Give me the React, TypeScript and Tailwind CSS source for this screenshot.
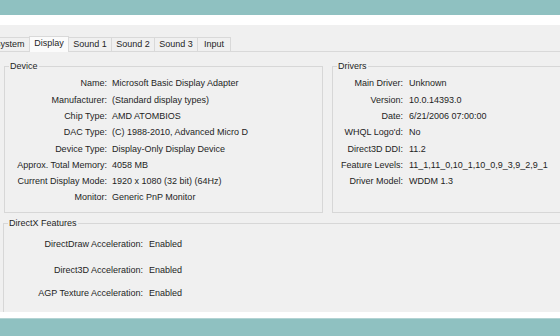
const device: [string, string][] = [
  ["Name:", "Microsoft Basic Display Adapter"],
  ["Manufacturer:", "(Standard display types)"],
  ["Chip Type:", "AMD ATOMBIOS"],
  ["DAC Type:", "(C) 1988-2010, Advanced Micro D"],
  ["Device Type:", "Display-Only Display Device"],
  ["Approx. Total Memory:", "4058 MB"],
  ["Current Display Mode:", "1920 x 1080 (32 bit) (64Hz)"],
  ["Monitor:", "Generic PnP Monitor"],
];

const drivers: [string, string][] = [
  ["Main Driver:", "Unknown"],
  ["Version:", "10.0.14393.0"],
  ["Date:", "6/21/2006 07:00:00"],
  ["WHQL Logo'd:", "No"],
  ["Direct3D DDI:", "11.2"],
  ["Feature Levels:", "11_1,11_0,10_1,10_0,9_3,9_2,9_1"],
  ["Driver Model:", "WDDM 1.3"],
];

const tabs = [
  { name: "System", w: "w-[40px]" },
  { name: "Display", w: "w-[40px]", active: true },
  { name: "Sound 1", w: "w-[42px]" },
  { name: "Sound 2", w: "w-[43px]" },
  { name: "Sound 3", w: "w-[43px]" },
  { name: "Input", w: "w-[34px]" },
];

function GroupLabel({ text }: { text: string }) {
  return (
    <span className="absolute left-[4px] -top-[6px] px-[1px] bg-[#f0f0f0] leading-[11px] whitespace-nowrap">
      {text}
    </span>
  );
}

function InfoRows({ rows, labelW, gap }: { rows: [string, string][]; labelW: string; gap: string }) {
  return (
    <div className="flex flex-col pt-[9px]">
      {rows.map(([k, v]) => (
        <div key={k} className={`flex items-center h-[16.3px] whitespace-nowrap ${gap}`}>
          <span className={`${labelW} text-right shrink-0`}>{k}</span>
          <span>{v}</span>
        </div>
      ))}
    </div>
  );
}

export default function App() {
  return (
    <div className="w-[560px] h-[336px] overflow-hidden flex flex-col bg-[#8fc1c1] text-[9px] text-[#1e1e1e] font-['Liberation_Sans',Arial,sans-serif]">
      <div className="h-[15px] shrink-0" />
      <div className="h-[10px] shrink-0 bg-white" />

      <div className="h-[287px] shrink-0 bg-[#f0f0f0] overflow-hidden flex flex-col">
        {/* Tab strip */}
        <div className="h-[27px] shrink-0 flex items-end border-b border-[#d9d9d9]">
          <div className="flex items-end -ml-[11px]">
            {tabs.map((t, i) =>
              t.active ? (
                <div
                  key={t.name}
                  className={`${t.w} h-[16px] flex items-center justify-center pb-[1px] bg-[#fbfbfb] border-t border-x border-[#d9d9d9] -mb-px`}
                >
                  {t.name}
                </div>
              ) : (
                <div
                  key={t.name}
                  className={`${t.w} h-[14px] flex items-center justify-center pt-[1px] border-t border-[#d9d9d9] ${
                    i === tabs.length - 1 ? "border-r" : ""
                  } ${tabs[i - 1]?.active ? "" : "border-l"}`}
                >
                  {t.name}
                </div>
              )
            )}
          </div>
        </div>

        {/* Device / Drivers */}
        <div className="mt-[14px] pl-[4px] flex gap-[9px] shrink-0">
          <div className="relative w-[319px] h-[147px] shrink-0 border border-[#d7d7d7]">
            <GroupLabel text="Device" />
            <InfoRows rows={device} labelW="w-[102px]" gap="gap-[5px]" />
          </div>
          <div className="relative w-[240px] h-[147px] shrink-0 border border-[#d7d7d7]">
            <GroupLabel text="Drivers" />
            <InfoRows rows={drivers} labelW="w-[70px]" gap="gap-[6px]" />
          </div>
        </div>

        {/* DirectX Features */}
        <div className="mt-[10px] pl-[3px] shrink-0">
          <div className="relative w-[600px] h-[120px] border border-[#d7d7d7]">
            <GroupLabel text="DirectX Features" />
            <div className="flex flex-col pt-[13px] whitespace-nowrap">
              <div className="flex items-center h-[16px] gap-[6px]">
                <span className="w-[139px] text-right">DirectDraw Acceleration:</span>
                <span>Enabled</span>
              </div>
              <div className="flex items-center h-[16px] gap-[6px] mt-[10px]">
                <span className="w-[139px] text-right">Direct3D Acceleration:</span>
                <span>Enabled</span>
              </div>
              <div className="flex items-center h-[16px] gap-[6px] mt-[7px]">
                <span className="w-[139px] text-right">AGP Texture Acceleration:</span>
                <span>Enabled</span>
              </div>
            </div>
          </div>
        </div>
      </div>

      <div className="h-[6px] shrink-0 bg-white" />
      <div className="h-px shrink-0 bg-[#b3d3d3]" />
    </div>
  );
}
